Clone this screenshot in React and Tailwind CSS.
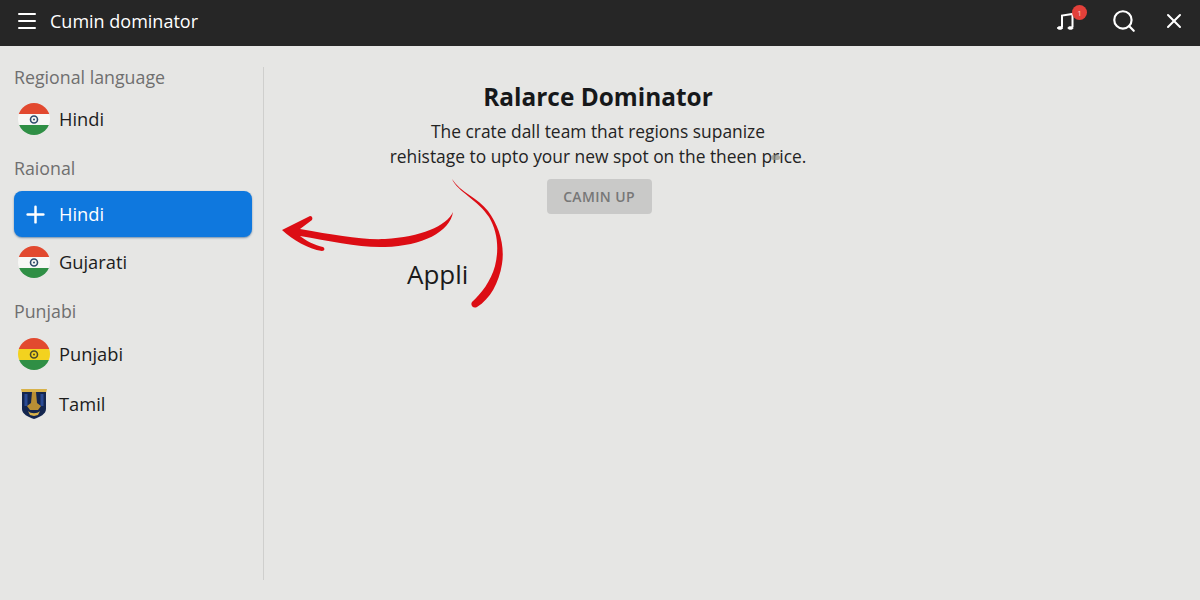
import { Menu, Plus, Search, X } from 'lucide-react';

function RoundFlag({ top = '#e2492f', mid = '#f7f7f5', bottom = '#2f8f45', seal = '#2d4a6b' }) {
  return (
    <svg width="32" height="32" viewBox="0 0 32 32" className="shrink-0">
      <defs>
        <clipPath id="round-flag">
          <circle cx="16" cy="16" r="16" />
        </clipPath>
      </defs>
      <g clipPath="url(#round-flag)">
        <rect width="32" height="11" fill={top} />
        <rect y="11" width="32" height="11" fill={mid} />
        <rect y="22" width="32" height="10" fill={bottom} />
      </g>
      <circle cx="16" cy="16.5" r="3.5" fill="none" stroke={seal} strokeWidth="1.6" />
      <circle cx="16" cy="16.5" r="1" fill={seal} />
    </svg>
  );
}

function TamilCrest() {
  return (
    <svg width="32" height="32" viewBox="0 0 32 32" className="shrink-0">
      <path d="M3 1h26l-1 4H4z" fill="#d8b24a" />
      <path d="M4 4h24v17c0 5-6 8-12 10C10 29 4 26 4 21z" fill="#14264f" />
      <path d="M8 6v12M24 6v12" stroke="#2a4a94" strokeWidth="3" />
      <path d="M14 4h4l1 11 4 3-3 4h-8l-3-4 4-3z" fill="#b98f34" />
      <path d="M10 23c3 3 9 3 12 0l-2 4-4 1-4-1z" fill="#d8b24a" />
    </svg>
  );
}

function SectionLabel({ className, children }) {
  return <p className={`flex h-5 items-center text-[17.8px] text-[#6f6f6f] ${className}`}>{children}</p>;
}

function LanguageRow({ icon, label, className }) {
  return (
    <div className={`flex h-11 items-center gap-[9px] pl-1 text-[18.3px] text-[#1c1c1c] ${className}`}>
      {icon}
      <span>{label}</span>
    </div>
  );
}

export default function App() {
  return (
    <div
      className="relative flex h-[600px] w-[1200px] flex-col overflow-hidden bg-[#e6e6e4]"
      style={{ fontFamily: '"Open Sans", "Noto Sans", sans-serif' }}
    >
      <header className="flex h-[46px] shrink-0 items-center justify-between bg-[#262626] pb-1 pl-[15px] pr-[14px] text-white">
        <div className="flex items-center gap-[11px]">
          <Menu className="h-6 w-6" strokeWidth={2} />
          <span className="text-[18px]">Cumin dominator</span>
        </div>
        <div className="flex items-center">
          <div className="relative mr-[28px] h-7 w-7">
            <svg width="28" height="28" viewBox="0 0 28 28" fill="none" stroke="white" strokeWidth="2">
              <path d="M7 20V8.5L17.5 7v13" />
              <ellipse cx="5" cy="21" rx="2.6" ry="1.3" fill="white" strokeWidth="1" />
              <ellipse cx="15.5" cy="21" rx="2.6" ry="1.3" fill="white" strokeWidth="1" />
            </svg>
            <span className="absolute right-[-4px] top-[-2px] flex h-[15px] w-[15px] items-center justify-center rounded-full bg-[#e2403a] text-[8px] text-[#f7c9c5]">
              1
            </span>
          </div>
          <Search className="mr-[25px] h-[26px] w-[26px]" strokeWidth={2} />
          <X className="h-6 w-6" strokeWidth={2} />
        </div>
      </header>

      <div className="flex flex-1 pb-5 pt-[21px]">
        <aside className="w-[264px] shrink-0 border-r border-[#cfcfcd] pl-[14px] pr-[11px]">
          <SectionLabel>Regional language</SectionLabel>
          <LanguageRow className="mt-[10px]" icon={<RoundFlag />} label="Hindi" />
          <SectionLabel className="mt-[17px]">Raional</SectionLabel>
          <div className="mt-[13px] flex h-[46px] items-center gap-[10px] rounded-lg bg-[#0f78de] pl-2 text-[18.3px] text-white shadow-[0_1px_2px_rgba(0,60,120,0.5)]">
            <Plus className="h-[27px] w-[27px]" strokeWidth={2.2} />
            <span>Hindi</span>
          </div>
          <LanguageRow className="mt-[3px]" icon={<RoundFlag />} label="Gujarati" />
          <SectionLabel className="mt-[17px]">Punjabi</SectionLabel>
          <LanguageRow
            className="mt-[11px]"
            icon={<RoundFlag mid="#f3d21f" seal="#4a4a2a" />}
            label="Punjabi"
          />
          <LanguageRow className="mt-[6px]" icon={<TamilCrest />} label="Tamil" />
        </aside>

        <main className="flex flex-1 flex-col items-center pr-[268px] pt-[14px]">
          <h1 className="text-[24.4px] font-bold leading-8 text-[#16181a]">Ralarce Dominator</h1>
          <p className="mt-[6px] text-center text-[17.4px] leading-[25px] text-[#232323]">
            The crate dall team that regions supanize
            <br />
            rehistage to upto your new spot on the theen price.
          </p>
          <button className="ml-[2px] mt-[10px] flex h-[35px] w-[105px] items-center justify-center rounded bg-[#c9c9c8] text-[14px] font-semibold tracking-wide text-[#777777]">
            CAMIN UP
          </button>
        </main>
      </div>

      <svg className="pointer-events-none absolute inset-0" width="1200" height="600" viewBox="0 0 1200 600" fill="#dc0d14">
        <path d="M453 212C447 226 420 237 385 239C360 240 335 235 300 229L312 220C313 218 312 216 310 216L282 230C293 240 308 249 322 251C325 251 325 248 323 247C315 245 306 241 300 236C330 241 360 248 385 247C422 246 450 232 453 212Z" />
        <path d="M452 179C458 192 478 200 489 217C498 232 499 250 495 266C491 281 481 294 472 302C470 305 473 309 477 307C490 299 499 283 502 264C505 245 499 226 488 211C478 198 460 192 452 179Z" />
      </svg>
      <span className="absolute left-[407px] top-[255px] text-[26px] text-[#1a1a1a]">Appli</span>
      <span className="absolute left-[771px] top-[155px] h-[5px] w-[9px] rounded-sm bg-[#8f8f86]/70" />
    </div>
  );
}
